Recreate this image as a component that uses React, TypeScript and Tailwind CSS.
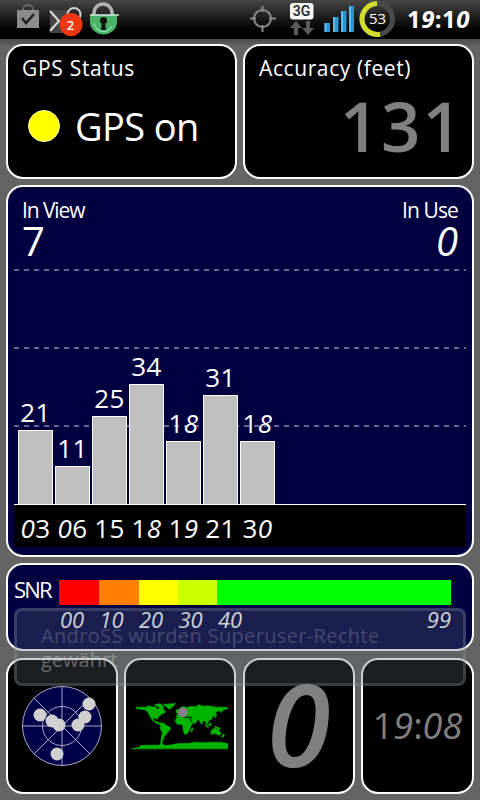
import React, { ReactNode } from 'react';

const satellites = [
  { id: '03', snr: 21 },
  { id: '06', snr: 11 },
  { id: '15', snr: 25 },
  { id: '18', snr: 34 },
  { id: '19', snr: 18 },
  { id: '21', snr: 31 },
  { id: '30', snr: 18 },
];

// Bar pixels per SNR unit
const SNR_SCALE = 3.535;

const skyDots = [
  [67, 18],
  [18, 29],
  [30, 35],
  [37, 39],
  [56, 39],
  [63, 31],
  [35, 68],
];

interface CardProps {
  children?: ReactNode;
  className?: string;
}

function Card({ children, className = 'bg-black' }: CardProps) {
  return <div className={`rounded-[17px] border-2 border-white ${className}`}>{children}</div>;
}

// Round digits lean to the right, the others stay upright
function Digits({ value }: { value: string }) {
  return (
    <>
      {value.split('').map((c, i) => (
        <span key={i} className={'089'.includes(c) ? 'italic' : ''}>
          {c}
        </span>
      ))}
    </>
  );
}

function StatusBar() {
  return (
    <header className="flex h-[39px] shrink-0 items-start bg-gradient-to-b from-[#484848] via-[#181818] to-black">
      <svg className="ml-4 shrink-0" width="106" height="39" viewBox="16 0 106 39" fill="none">
        <path d="M23 10V9a5 4 0 0 1 10 0v1" stroke="#666" strokeWidth="2" />
        <path d="M17 10h22v18H17z" fill="#8c8c8c" />
        <path d="M22 18l4 5 8-9" stroke="#222" strokeWidth="2.5" />
        <path d="M50 10h20v23H50z" fill="#444" />
        <path d="M50 11l9 10-9 10" stroke="#ddd" strokeWidth="2" />
        <circle cx="74" cy="14.500" r="6.500" stroke="#d5d5d5" strokeWidth="2" />
        <circle cx="71" cy="24.500" r="11.500" fill="#ed3715" />
        <text x="70.500" y="29.500" textAnchor="middle" fill="#fff" fontSize="13" fontWeight="600" fontFamily="Open Sans, sans-serif">
          2
        </text>
        <path d="M94 15v-2a9 9 0 0 1 18 0v2" stroke="#b4b4b4" strokeWidth="3.500" />
        <path d="M90 15h27v7a13.500 12.500 0 0 1-27 0z" fill="#48b368" />
        <path d="M94 23a9.500 9.500 0 0 0 18 3" stroke="#8fdca4" strokeWidth="1.500" />
        <path d="M90 15h29" stroke="#d4efdb" strokeWidth="1.500" />
        <circle cx="103.500" cy="20.500" r="3.500" fill="#111" />
        <path d="M102 22h3l1 8h-5z" fill="#111" />
      </svg>
      <svg className="ml-auto shrink-0" width="152" height="39" viewBox="248 0 152 39" fill="none">
        <circle cx="262.500" cy="18.500" r="8.500" stroke="#8a8a8a" strokeWidth="2" />
        <path d="M262.500 6v6M262.500 25v7M250 18.500h6M269 18.500h7" stroke="#8a8a8a" strokeWidth="2" />
        <rect x="290" y="3" width="23.500" height="16.500" rx="3" fill="#f4f4f4" />
        <text
          x="301.500"
          y="16"
          textAnchor="middle"
          fill="#222"
          fontSize="14"
          fontWeight="500"
          fontFamily="Roboto, sans-serif"
        >
          3G
        </text>
        <path d="M296 21l6 7h-4v7h-4v-7h-4zM308 35l-6-7h4v-7h4v7h4z" fill="#5c5c5c" />
        <path d="M324.500 23h5.500v9h-5.500zM333 17h5.500v15H333zM341 11h5.500v21H341zM349 6h5v26h-5z" fill="#2b95d3" />
        <path d="M324.500 23h2v9h-2zM333 17h2v15h-2zM341 11h2v21h-2zM349 6h2v26h-2z" fill="#62b9eb" />
        <circle cx="377" cy="19" r="15.500" stroke="#4a4a4a" strokeWidth="5" />
        <path d="M377 3.500a15.500 15.500 0 1 0 3 30.800" stroke="#d0dd2a" strokeWidth="5" />
        <text x="377.500" y="24" textAnchor="middle" fill="#fff" fontSize="15" fontFamily="Open Sans, sans-serif">
          53
        </text>
      </svg>
      <span className="ml-[7px] w-[73px] pt-[3px] text-[24px] leading-8 font-bold tracking-[0.4px]">
        <Digits value="19:10" />
      </span>
    </header>
  );
}

function SatelliteChart() {
  return (
    <Card className="h-[372px] bg-[#000041] px-1.5">
      <div className="flex h-[82px] justify-between px-2 pt-[9px]">
        <div>
          <div className="text-[21px] leading-7 tracking-[-1.1px]">In View</div>
          <div className="text-[40px] leading-[34px]">7</div>
        </div>
        <div className="text-right">
          <div className="text-[21px] leading-7 tracking-[-0.9px]">In Use</div>
          <div className="text-[40px] leading-[34px] italic">0</div>
        </div>
      </div>
      <div className="relative h-[236px] border-b border-white">
        <div className="flex flex-col gap-[76px]">
          {[0, 1, 2].map((n) => (
            <div
              key={n}
              className="h-0.5 bg-[repeating-linear-gradient(90deg,#666690_0_5px,transparent_5px_10px)]"
            />
          ))}
        </div>
        <div className="absolute inset-0 flex items-end gap-0.5 pl-1">
          {satellites.map((s) => (
            <div key={s.id} className="flex w-[35px] flex-col items-center">
              <span className="text-[26px] leading-[35px] tracking-[0.5px]">
                <Digits value={String(s.snr)} />
              </span>
              <div
                className="w-full border border-b-0 border-white bg-[#c0c0c0]"
                style={{ height: Math.floor(s.snr * SNR_SCALE) }}
              />
            </div>
          ))}
        </div>
      </div>
      <div className="flex h-[42px] gap-0.5 bg-black pt-[5px] pl-1">
        {satellites.map((s) => (
          <span key={s.id} className="w-[35px] text-center text-[26px] leading-9 tracking-[0.5px]">
            <Digits value={s.id} />
          </span>
        ))}
      </div>
    </Card>
  );
}

function SnrScale() {
  return (
    <Card className="h-[88px] bg-[#000041] pt-[15px] pl-1.5">
      <div className="flex h-[25px]">
        <span className="w-[45px] text-[22px] leading-[18px] tracking-[-1.8px]">SNR</span>
        <div className="flex w-[392px]">
          <div className="w-[40px] bg-[#ff0000]" />
          <div className="w-[40px] bg-[#ff8000]" />
          <div className="w-[39px] bg-[#ffff00]" />
          <div className="w-[39px] bg-[#ccff00]" />
          <div className="flex-1 bg-[#00ff00]" />
        </div>
      </div>
      <div className="ml-[46px] flex w-[391px] text-[22px] leading-[28px]">
        {['00', '10', '20', '30', '40'].map((t) => (
          <span key={t} className="w-[39.5px] italic">
            {t}
          </span>
        ))}
        <span className="ml-auto">
          <Digits value="99" />
        </span>
      </div>
    </Card>
  );
}

function SkyPlot() {
  return (
    <svg width="82" height="82" viewBox="-1 -1 82 82" className="mt-[25px] ml-[13px]">
      <g fill="none" stroke="#a8a8c8" strokeWidth="1">
        <circle cx="40" cy="40" r="39.500" fill="#000048" />
        <circle cx="40" cy="40" r="19.500" />
        <path d="M0 40h80M40 0v80M12 12l56 56M68 12L12 68" />
      </g>
      {skyDots.map(([x, y]) => (
        <circle key={x} cx={x} cy={y} r="6.500" fill="#d0d0d0" />
      ))}
    </svg>
  );
}

function WorldMap() {
  return (
    <svg width="96" height="47" viewBox="36 160 288 140" className="mt-[43px] ml-1.5">
      <g fill="#00b400" stroke="#00b400" strokeWidth="2">
        <path d="M48 172L76 172 88 168 98 172 106 169 112 178 119 176 118 167 125 170 130 177 136 187 122 195 114 203 111 209 104 204 98 206 104 215 113 216 122 222 116 223 106 218 96 210 90 199 84 188 76 180 62 178 50 177z" />
        <path d="M104 164l16 -2 12 8-8 3-12-4zM130 164l36-3-7 9-11 8-8-7z" />
        <path d="M121 219l10 1 7 6 13 7-1 8-8 6-3 8-7 5-2 8-4 8 2 8 7 4-9 0-4-8 2-18 4-14-6-8-1-12z" />
        <path d="M168 207l5-5 15 1 8 3 12 1 5 10 8 1-9 11-4 13-7 10-7 1-4-10-2-18-16-2-6-8zM215 236l4-2-3 12-4-2z" />
        <path d="M169 201l3-8 9-5-3-10 10-8 12 3 11-3 16 1 10-6 12 4 15-1 23 4 34 0 2 5-13 3 -7 8-6-6-9 5-3 9-8 3 0 6-7 6-6 0 1 8-5 5-3-8-5-4-5 5-2 7-4-6-3-7-10-2 3 6-8 6-8-9-3-8-14 2-8-6-8 5z" />
        <path d="M168 181l5-3 2 9-6 3zM283 201l4-8 3 0-3 10zM258 224l8 9-2 1-9-8zM266 222l7-3-1 9-5 1zM283 230l14 3 3 5-13-4z" />
        <path d="M273 243l8-6 5-3 4 5 4-4 4 9 5 6-5 7-7-4-8-2-9 3zM310 252l4 4-7 7-2-2z" />
        <path d="M36 296l20-3 6-6 30-1 25 0 8-5 6 5-3 2 28-3 20-4 26 0 26-4 16 2 34-2 30 1 20 5-4 7 8 4v3H36z" />
      </g>
      <path d="M192 201h22l4 3h-22z" fill="#000" />
      <circle cx="188" cy="187" r="15" fill="#8c7d8c" />
    </svg>
  );
}

function Toast() {
  return (
    <div className="absolute top-[608px] left-[14px] h-[78px] w-[452px] rounded-lg border-[3px] border-[#b4bec8]/20 bg-[#5a6771]/30 pt-[13px] pl-6 text-[20px] leading-6">
      <div className="tracking-[0.35px] text-[#c8c8d2]/26">AndroSS wurden Superuser-Rechte</div>
      <div className="text-[#c8c8c8]/45">gewährt</div>
    </div>
  );
}

export default function App() {
  return (
    <div className="relative flex h-[800px] w-[480px] flex-col overflow-hidden bg-[#646464] font-['Open_Sans',sans-serif] font-medium text-white">
      <StatusBar />
      <main className="flex flex-col gap-1.5 bg-gradient-to-b from-[#4c4c4c] to-[#646464] to-[8px] px-1.5 pt-[5px]">
        <div className="grid h-[135px] grid-cols-2 gap-1.5">
          <Card className="bg-black px-3.5 pt-2">
            <div className="text-[21px] leading-7 tracking-[0.7px]">GPS Status</div>
            <div className="mt-[18px] flex items-center gap-[15px] pl-1.5">
              <div className="size-[32px] rounded-full border border-[#ffffb0] bg-[#ffff00]" />
              <div className="text-[38px] leading-[52px] tracking-[-0.6px]">GPS on</div>
            </div>
          </Card>
          <Card className="bg-black px-3.5 pt-2">
            <div className="text-[21px] leading-7 tracking-[0.6px]">Accuracy (feet)</div>
            <div className="mt-[3px] -mr-1.5 text-right text-[69px] leading-[80px] font-semibold tracking-[2px] text-[#808080]">
              131
            </div>
          </Card>
        </div>
        <SatelliteChart />
        <SnrScale />
        <div className="mt-px grid h-[136px] grid-cols-[112px_112px_112px_113px] justify-between">
          <Card>
            <SkyPlot />
          </Card>
          <Card>
            <WorldMap />
          </Card>
          <Card className="flex items-center justify-center bg-black text-[115px] leading-[132px] font-semibold text-[#808080] italic">
            <span className="-mt-1.5">0</span>
          </Card>
          <Card className="flex items-center justify-center bg-black text-[36px] leading-none text-[#808080]">
            <Digits value="19:08" />
          </Card>
        </div>
      </main>
      <Toast />
    </div>
  );
}
